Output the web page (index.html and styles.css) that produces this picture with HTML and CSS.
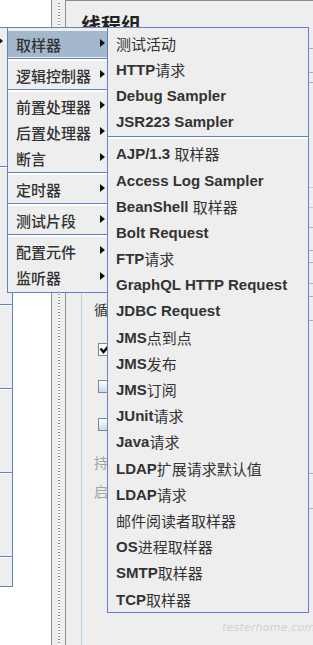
FILE: index.html
```html
<!DOCTYPE html>
<html lang="zh-CN">
<head>
  <meta charset="UTF-8">
  <meta name="viewport" content="width=device-width, initial-scale=1.0">
  <title>添加 - 取样器</title>
  <link rel="stylesheet" href="styles.css">
</head>
<body>
  <div class="workbench">
    <div class="tree-panel"></div>
    <div class="split-bar"><div class="split-grip"></div></div>
    <div class="editor">
      <div class="editor-main">
        <div class="editor-title">线程组</div>
        <div class="editor-group">
          <div class="editor-label">循环次数</div>
          <div class="editor-check checked first">
            <svg width="13" height="13" viewBox="0 0 13 13"><path d="M2.5 5.5 L5.5 9 L11 2.5" fill="none" stroke="#111" stroke-width="2.6"/></svg>
          </div>
          <div class="editor-check second"></div>
          <div class="editor-check third"></div>
          <div class="editor-label muted after-checks">持续时间</div>
          <div class="editor-label muted last">启动延迟</div>
        </div>
      </div>
      <div class="editor-fields">
        <div class="field-line"></div>
        <div class="field-line"></div>
        <div class="field-line"></div>
        <div class="field-line blue"></div>
        <div class="field-line blue"></div>
        <div class="field-line"></div>
        <div class="field-line"></div>
        <div class="field-line"></div>
        <div class="field-line"></div>
        <div class="field-line"></div>
        <div class="field-line"></div>
        <div class="field-line"></div>
        <div class="field-line"></div>
      </div>
    </div>
  </div>

  <!-- 树节点右键菜单（只露出右边一小条） -->
  <div class="popup popup-tree">
    <div class="tree-group tree-group-a">
      <div class="tree-item"><span class="menu-arrow"></span></div>
    </div>
    <div class="tree-group tree-group-b"></div>
    <div class="tree-group tree-group-c"></div>
    <div class="tree-group tree-group-c"></div>
    <div class="tree-group tree-group-c"></div>
    <div class="tree-group tree-group-d"></div>
  </div>

  <!-- 添加 子菜单 -->
  <div class="popup popup-add">
    <div class="menu-item active">取样器<span class="menu-arrow"></span></div>
    <div class="menu-sep"></div>
    <div class="menu-item">逻辑控制器<span class="menu-arrow"></span></div>
    <div class="menu-sep"></div>
    <div class="menu-item">前置处理器<span class="menu-arrow"></span></div>
    <div class="menu-item">后置处理器<span class="menu-arrow"></span></div>
    <div class="menu-item">断言<span class="menu-arrow"></span></div>
    <div class="menu-sep"></div>
    <div class="menu-item">定时器<span class="menu-arrow"></span></div>
    <div class="menu-sep"></div>
    <div class="menu-item">测试片段<span class="menu-arrow"></span></div>
    <div class="menu-sep"></div>
    <div class="menu-item">配置元件<span class="menu-arrow"></span></div>
    <div class="menu-item">监听器<span class="menu-arrow"></span></div>
  </div>

  <!-- 取样器 子菜单 -->
  <div class="popup popup-sampler">
    <div class="menu-item">测试活动</div>
    <div class="menu-item"><b>HTTP</b>请求</div>
    <div class="menu-item"><b>Debug Sampler</b></div>
    <div class="menu-item"><b>JSR223 Sampler</b></div>
    <div class="menu-sep"></div>
    <div class="menu-item"><b>AJP/1.3&nbsp;</b>取样器</div>
    <div class="menu-item"><b>Access Log Sampler</b></div>
    <div class="menu-item"><b>BeanShell&nbsp;</b>取样器</div>
    <div class="menu-item"><b>Bolt Request</b></div>
    <div class="menu-item"><b>FTP</b>请求</div>
    <div class="menu-item"><b>GraphQL HTTP Request</b></div>
    <div class="menu-item"><b>JDBC Request</b></div>
    <div class="menu-item"><b>JMS</b>点到点</div>
    <div class="menu-item"><b>JMS</b>发布</div>
    <div class="menu-item"><b>JMS</b>订阅</div>
    <div class="menu-item"><b>JUnit</b>请求</div>
    <div class="menu-item"><b>Java</b>请求</div>
    <div class="menu-item"><b>LDAP</b>扩展请求默认值</div>
    <div class="menu-item"><b>LDAP</b>请求</div>
    <div class="menu-item">邮件阅读者取样器</div>
    <div class="menu-item"><b>OS</b>进程取样器</div>
    <div class="menu-item"><b>SMTP</b>取样器</div>
    <div class="menu-item"><b>TCP</b>取样器</div>
  </div>

  <div class="watermark">testerhome.com</div>
</body>
</html>
```

FILE: styles.css
```css
* {
  margin: 0;
  padding: 0;
  box-sizing: border-box;
}

body {
  width: 313px;
  height: 645px;
  overflow: hidden;
  position: relative;
  background-color: #eeeeee;
  font-family: "Liberation Sans", "Noto Sans CJK SC", sans-serif;
  color: #333333;
}

/* 背景：左边树、分隔条、右边编辑区 */
.workbench {
  display: flex;
  height: 100%;
}

.tree-panel {
  width: 52px;
  background-color: #ffffff;
  border-right: 1px solid #8e8e8e;
}

.split-bar {
  width: 14px;
  display: flex;
  justify-content: center;
  padding-top: 3px;
  background-color: #eeeeee;
  border-right: 1px solid #8e8e8e;
}

.split-grip {
  width: 2px;
  background-image: repeating-linear-gradient(to bottom, #8f8f8f 0, #8f8f8f 1px, #ffffff 1px, #ffffff 3px);
}

.editor {
  flex: 1;
  display: flex;
  background-color: #eeeeee;
  border-top: 1px solid #8c8c8c;
}

.editor-main {
  flex: 1;
  display: flex;
  flex-direction: column;
  padding-left: 15px;
}

.editor-title {
  margin-top: 15px;
  font-size: 20px;
  line-height: 20px;
  font-weight: bold;
  color: #222222;
}

.editor-group {
  flex: 1;
  margin-top: 12px;
  padding: 252px 0 0 12px;
  border-left: 1px solid #b8cfe5;
}

.editor-label {
  font-size: 14px;
  line-height: 20px;
  white-space: nowrap;
  color: #333333;
}

.editor-label.muted {
  color: #a3a3a3;
}

.editor-label.after-checks {
  margin-top: 22px;
}

.editor-label.last {
  margin-top: 9px;
}

.editor-check {
  width: 13px;
  height: 13px;
  margin-left: 4px;
  border: 1px solid #7a8a99;
  background: linear-gradient(to bottom, #ffffff, #c9d9ea);
}

.editor-check svg {
  display: block;
  margin: -1px 0 0 -1px;
}

.editor-check.first {
  margin-top: 23px;
  background: #ffffff;
}

.editor-check.second {
  margin-top: 24px;
}

.editor-check.third {
  margin-top: 25px;
}

/* 右侧被菜单挡住的输入框边线 */
.editor-fields {
  width: 64px;
  margin-top: 47px;
  display: grid;
  grid-template-rows: 24px 10px 105px 20px 20px 23px 12px 21px 13px 24px 153px 35px 1fr;
}

.field-line {
  border-top: 1px solid #b0b0b0;
}

.field-line.blue {
  border-top-color: #b8cfe5;
}

/* 弹出菜单 */
.popup {
  position: absolute;
  top: 27px;
  background-color: #eeeeee;
  border: 1px solid #6382bf;
  font-size: 15px;
}

.popup-tree {
  left: -100px;
  width: 113px;
  height: 560px;
}

.tree-group {
  border-bottom: 1px solid #6382bf;
  box-shadow: 0 1px 0 #ffffff;
}

.tree-group-a {
  height: 139px;
  padding-top: 1px;
}

.tree-group-b {
  height: 138px;
}

.tree-group-c {
  height: 84px;
}

.tree-group-d {
  height: 29px;
  border-bottom: none;
  box-shadow: none;
}

.tree-item {
  height: 26px;
  display: flex;
  align-items: center;
  padding-right: 7px;
}

.popup-add {
  left: 7px;
  width: 101px;
  padding: 3px 0 2px;
  font-weight: 500;
}

.popup-sampler {
  left: 107px;
  width: 202px;
  padding: 2px 0 0;
}

.menu-item {
  height: 26px;
  display: flex;
  align-items: center;
  padding-left: 8px;
  white-space: nowrap;
}

.popup-sampler .menu-item {
  height: 26.2px;
}

.menu-item b {
  font-weight: bold;
}

.menu-item.active {
  background-color: #a3b8cc;
}

.menu-arrow {
  margin-left: auto;
  margin-right: 2px;
  margin-top: -2px;
  width: 0;
  height: 0;
  border-left: 5px solid #111111;
  border-top: 4.5px solid transparent;
  border-bottom: 4.5px solid transparent;
}

.menu-sep {
  height: 5px;
  padding-top: 1px;
}

.popup-sampler .menu-sep {
  height: 6px;
}

.menu-sep::before {
  content: "";
  display: block;
  height: 2px;
  border-top: 1px solid #6382bf;
  background-color: #ffffff;
}

.watermark {
  position: absolute;
  left: 222px;
  top: 621px;
  font-family: "DejaVu Sans", sans-serif;
  font-style: italic;
  font-size: 11px;
  letter-spacing: 0.2px;
  color: #d2d2d2;
}
```
